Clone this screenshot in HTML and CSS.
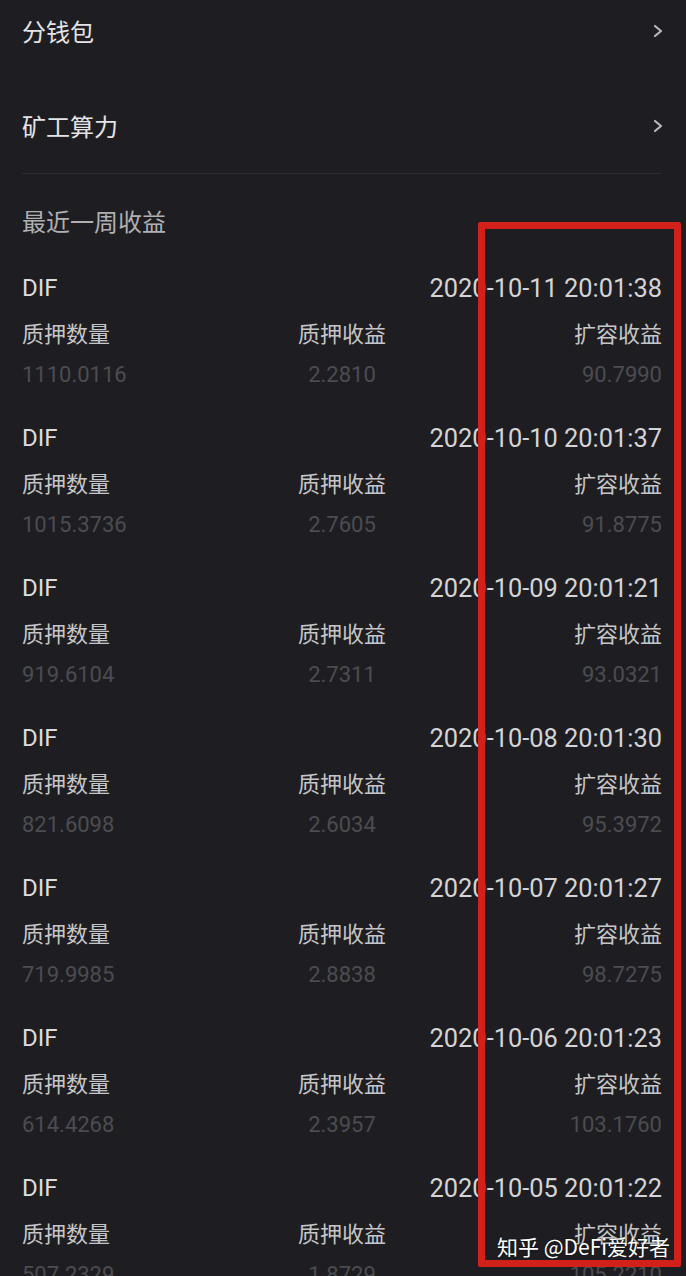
FILE: index.html
```html
<!DOCTYPE html>
<html lang="zh">
<head>
<meta charset="utf-8">
<title>收益</title>
<link rel="stylesheet" href="styles.css">
</head>
<body>
<div class="page">
  <div class="menu">
    <div class="menu-item"><span>分钱包</span><svg class="chev" width="12" height="16" viewBox="0 0 12 16"><path d="M3 3 L9 8 L3 13" fill="none" stroke="#b8b8bc" stroke-width="2.2" stroke-linecap="round" stroke-linejoin="round"/></svg></div>
    <div class="menu-item"><span>矿工算力</span><svg class="chev" width="12" height="16" viewBox="0 0 12 16"><path d="M3 3 L9 8 L3 13" fill="none" stroke="#b8b8bc" stroke-width="2.2" stroke-linecap="round" stroke-linejoin="round"/></svg></div>
  </div>
  <div class="divider"></div>
  <div class="section-title">最近一周收益</div>
  <div class="records">
    <div class="record">
      <div class="coin">DIF</div><div class="date">2020-10-11 20:01:38</div>
      <div class="label l">质押数量</div><div class="label c">质押收益</div><div class="label r">扩容收益</div>
      <div class="val l">1110.0116</div><div class="val c">2.2810</div><div class="val r">90.7990</div>
    </div>
    <div class="record">
      <div class="coin">DIF</div><div class="date">2020-10-10 20:01:37</div>
      <div class="label l">质押数量</div><div class="label c">质押收益</div><div class="label r">扩容收益</div>
      <div class="val l">1015.3736</div><div class="val c">2.7605</div><div class="val r">91.8775</div>
    </div>
    <div class="record">
      <div class="coin">DIF</div><div class="date">2020-10-09 20:01:21</div>
      <div class="label l">质押数量</div><div class="label c">质押收益</div><div class="label r">扩容收益</div>
      <div class="val l">919.6104</div><div class="val c">2.7311</div><div class="val r">93.0321</div>
    </div>
    <div class="record">
      <div class="coin">DIF</div><div class="date">2020-10-08 20:01:30</div>
      <div class="label l">质押数量</div><div class="label c">质押收益</div><div class="label r">扩容收益</div>
      <div class="val l">821.6098</div><div class="val c">2.6034</div><div class="val r">95.3972</div>
    </div>
    <div class="record">
      <div class="coin">DIF</div><div class="date">2020-10-07 20:01:27</div>
      <div class="label l">质押数量</div><div class="label c">质押收益</div><div class="label r">扩容收益</div>
      <div class="val l">719.9985</div><div class="val c">2.8838</div><div class="val r">98.7275</div>
    </div>
    <div class="record">
      <div class="coin">DIF</div><div class="date">2020-10-06 20:01:23</div>
      <div class="label l">质押数量</div><div class="label c">质押收益</div><div class="label r">扩容收益</div>
      <div class="val l">614.4268</div><div class="val c">2.3957</div><div class="val r">103.1760</div>
    </div>
    <div class="record">
      <div class="coin">DIF</div><div class="date">2020-10-05 20:01:22</div>
      <div class="label l">质押数量</div><div class="label c">质押收益</div><div class="label r">扩容收益</div>
      <div class="val l">507.2329</div><div class="val c">1.8729</div><div class="val r">105.2210</div>
    </div>
  </div>
  <div class="highlight"></div>
  <div class="watermark">知乎 @DeFi爱好者</div>
</div>
</body>
</html>
```

FILE: styles.css
```css
html, body {
  margin: 0;
  padding: 0;
  background: #1e1e22;
}
body {
  font-family: Roboto, "Noto Sans CJK SC", sans-serif;
  color: #e2e2e4;
  overflow: hidden;
}
.page {
  position: relative;
  width: 686px;
  height: 1276px;
  overflow: hidden;
}
.menu {
  margin-top: -17px;
  padding: 0 22px 0 22px;
}
.menu-item {
  height: 95px;
  display: flex;
  align-items: center;
  justify-content: space-between;
  font-size: 24px;
  color: #e4e4e6;
}
.chev {
  display: block;
}
.divider {
  margin: 0 24px 0 22px;
  height: 1px;
  background: #2b2b30;
}
.section-title {
  padding: 34px 22px 35px;
  line-height: 30px;
  font-size: 24px;
  color: #b0b0b3;
}
.records {
  padding: 0 24px 0 22px;
}
.record {
  display: grid;
  grid-template-columns: 1fr 1fr 1fr;
  grid-template-rows: 48px 40px 28px;
  align-items: start;
  padding-bottom: 34px;
}
.coin {
  font-size: 24px;
  line-height: 30px;
  color: #dcdcde;
}
.date {
  grid-column: 2 / 4;
  justify-self: end;
  font-size: 25.4px;
  line-height: 30px;
  color: #d4d4d6;
  white-space: nowrap;
}
.label {
  font-size: 22px;
  line-height: 28px;
  color: #c6c6c8;
}
.val {
  font-size: 22px;
  line-height: 28px;
  color: #4c4c50;
}
.l { justify-self: start; }
.c { justify-self: center; }
.r { justify-self: end; }
.highlight {
  position: absolute;
  left: 478px;
  top: 222px;
  width: 189px;
  height: 1031px;
  border: 7px solid #d2201a;
  border-radius: 2px;
}
.watermark {
  position: absolute;
  left: 497px;
  top: 1231px;
  font-family: "Noto Sans CJK SC", sans-serif;
  font-size: 21px;
  line-height: 30px;
  color: #ffffff;
  text-shadow: 0 0 2px rgba(0,0,0,0.6);
  white-space: nowrap;
}
```
